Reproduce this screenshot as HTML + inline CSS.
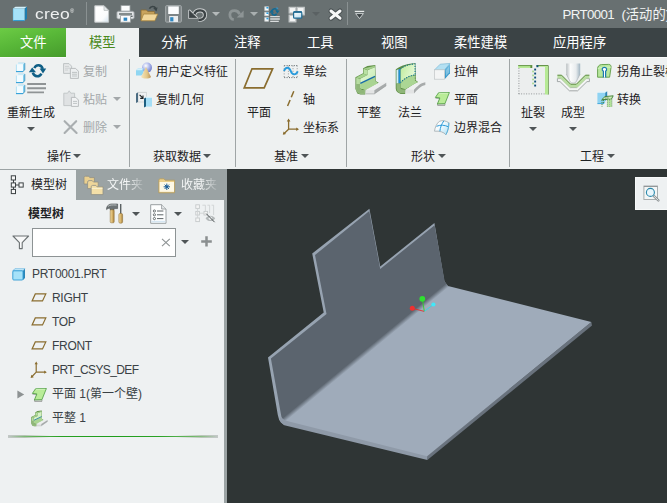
<!DOCTYPE html>
<html lang="zh-CN">
<head>
<meta charset="utf-8">
<title>PRT0001 - Creo</title>
<style>
html,body{margin:0;padding:0;}
body{width:667px;height:503px;overflow:hidden;position:relative;background:#2f3535;
 font-family:"Liberation Sans","Noto Sans CJK SC",sans-serif;font-size:12px;color:#1e2224;}
.abs{position:absolute;}
#title{left:0;top:0;width:667px;height:28px;background:#687071;}
#tabs{left:0;top:28px;width:667px;height:29px;background:#3b4345;}
#ribbon{left:0;top:57px;width:667px;height:112px;background:#eef1f1;box-shadow:inset 0 1px 0 #f9fafa;}
.tab{position:absolute;top:28px;height:29px;line-height:29.6px;font-size:13.3px;color:#fff;white-space:nowrap;}
.t{position:absolute;white-space:nowrap;line-height:16px;height:16px;}
.dis{color:#a3a8aa;}
.sep{position:absolute;top:59px;width:1px;height:108px;background:#9fa5a6;}
.arr{position:absolute;width:0;height:0;border-left:4px solid transparent;border-right:4px solid transparent;border-top:4.4px solid #4f5557;}
.arrl{border-top-color:#a3a8aa;}
svg{position:absolute;overflow:visible;}
#ptabs{left:0;top:169px;width:227px;height:31px;background:#9ba3a4;}
#pbody{left:0;top:199.6px;width:224px;height:304px;background:#eef1f2;}
#pdiv{left:224px;top:199.6px;width:3px;height:304px;background:#9ba3a4;}
.tree{font-size:12px;color:#3a4145;}
.lat{letter-spacing:-0.3px;}
</style>
</head>
<body>
<div id="title" class="abs"></div>
<div id="tabs" class="abs"></div>
<div id="ribbon" class="abs"></div>

<!-- title bar -->
<div class="t" style="left:34.5px;top:5px;font-size:15.5px;line-height:18px;color:#eef0f0;letter-spacing:0.2px;transform:scaleX(1.13);transform-origin:0 0;">creo<span style="font-size:5px;line-height:0;vertical-align:6px;letter-spacing:0;">®</span></div>
<div class="t" style="left:562.5px;top:6.8px;font-size:13.3px;color:#f2f4f4;"><span style="letter-spacing:-0.65px;">PRT0001</span><span style="margin-left:3.8px;"> (活动的)</span></div>


<!-- title bar icons -->
<svg style="left:12px;top:6px;" width="16" height="16" viewBox="0 0 16 16">
<polygon points="1,2.4 3.5,0.8 15,0.8 12.6,2.4" fill="#d4f1fc"/>
<polygon points="12.6,2.4 15,0.8 15,12.8 12.6,14.6" fill="#1d7db0"/>
<rect x="1" y="2.4" width="11.6" height="12.2" fill="#a6e2f9"/>
<path d="M1,14.6 H12.6" stroke="#2d9bd2" stroke-width="1"/>
<path d="M1.3,2.4 V14.6" stroke="#6cc4ea" stroke-width="0.6"/>
</svg>
<div class="abs" style="left:86px;top:2px;width:1px;height:23px;background:#8a9192;"></div>
<!-- new -->
<svg style="left:94px;top:5px;" width="16" height="18" viewBox="0 0 16 18">
<linearGradient id="newg" x1="0.2" y1="0.2" x2="1" y2="1"><stop offset="0" stop-color="#ffffff"/><stop offset="0.6" stop-color="#fbfcfd"/><stop offset="1" stop-color="#d3e3ef"/></linearGradient>
<path d="M0.8,0.8 H10 L14.6,5.4 V17.2 H0.8 Z" fill="url(#newg)" stroke="#c3c7c8" stroke-width="1"/>
<path d="M10,0.8 V5.4 H14.6 Z" fill="#e4e8ea" stroke="#b9bebf" stroke-width="0.8"/>
</svg>
<!-- print -->
<svg style="left:116px;top:5px;" width="19" height="18" viewBox="0 0 19 18">
<rect x="5" y="0.6" width="9" height="6" fill="#fbfcfd" stroke="#9aa0a2" stroke-width="0.8"/>
<rect x="0.8" y="6.2" width="17.4" height="7.8" rx="1.6" fill="#e4e7e9" stroke="#8d9496" stroke-width="0.9"/>
<rect x="3" y="8.2" width="13" height="1.6" fill="#6d7577"/>
<rect x="4.6" y="10.6" width="9.8" height="6.6" fill="#fbfcfd" stroke="#9aa0a2" stroke-width="0.8"/>
<rect x="7.6" y="12.6" width="3.6" height="3.2" fill="#2e86c0"/>
<rect x="15" y="10.6" width="1.6" height="1.4" fill="#5d6668"/>
</svg>
<!-- open -->
<svg style="left:140px;top:5px;" width="19" height="17" viewBox="0 0 19 17">
<path d="M1,5 H6.4 L7.8,6.6 H14.6 V15.6 H1 Z" fill="#c9a45e" stroke="#8c6d33" stroke-width="0.8"/>
<path d="M3.6,9 H17.8 L14.8,15.8 H1 Z" fill="#f1d79b" stroke="#a5843f" stroke-width="0.8"/>
<path d="M9.4,3.6 C11,0.8 14.6,0.8 15.6,3.4" fill="none" stroke="#3b4446" stroke-width="1.6"/>
<path d="M13.2,3 L17.6,2.4 L16.4,6.4 Z" fill="#3b4446"/>
</svg>
<!-- save -->
<svg style="left:165px;top:5px;" width="17" height="18" viewBox="0 0 17 18">
<rect x="0.7" y="0.7" width="15.6" height="16.4" rx="0.8" fill="#7d8486" stroke="#a8aeaf" stroke-width="1"/>
<rect x="3.2" y="1.4" width="10.6" height="7.6" fill="#fbfcfd"/>
<rect x="4.2" y="11" width="8.8" height="6" fill="#e9ecee"/>
<rect x="5.2" y="12.2" width="3.2" height="4.2" fill="#2e86c0"/>
</svg>
<!-- undo -->
<svg style="left:188px;top:7px;" width="19" height="15" viewBox="0 0 19 15">
<g stroke="#c9cdce" stroke-width="2.6" stroke-linejoin="round" fill="#c9cdce">
<path d="M6.4,7 C8.2,2.2 16.6,2 17,7.6 C17.2,11 14.4,13.2 10.4,12.9" fill="none" stroke-width="4.2"/>
<polygon points="1.4,3.8 1.4,10.8 8.6,10.8"/>
</g>
<path d="M6.4,7 C8.2,2.2 16.6,2 17,7.6 C17.2,11 14.4,13.2 10.4,12.9" fill="none" stroke="#3c4345" stroke-width="2.4"/>
<polygon points="1.4,3.8 1.4,10.8 8.6,10.8" fill="#3c4345" stroke="#3c4345" stroke-width="0.8" stroke-linejoin="round"/>
</svg>
<div class="arr" style="left:212px;top:12px;border-top-color:#b4b9ba;"></div>
<!-- redo -->
<svg style="left:227px;top:8px;" width="18" height="13" viewBox="0 0 18 13">
<path d="M12.6,6.2 C11,1.6 3.4,1.4 2.9,6.4 C2.7,9.4 4.6,11.4 6.8,11.4" fill="none" stroke="#8d9495" stroke-width="2.8"/>
<polygon points="16.6,2.6 16.6,9.6 9.6,9.6" fill="#8d9495"/>
</svg>
<div class="arr" style="left:250px;top:12px;border-top-color:#a9afb0;"></div>
<!-- regenerate small -->
<svg style="left:264px;top:5px;" width="17" height="18" viewBox="0 0 17 18">
<g fill="#fbfdfe" stroke="#c9cdce" stroke-width="0.8">
<rect x="0.8" y="1.8" width="3.6" height="3.6"/><rect x="0.8" y="7.2" width="3.6" height="3.6"/><rect x="0.8" y="12.6" width="3.6" height="3.6"/>
</g>
<g fill="#2d9fe0"><rect x="2.4" y="2" width="2" height="1.6"/><rect x="2.4" y="7.4" width="2" height="1.6"/><rect x="2.4" y="12.8" width="2" height="1.6"/></g>
<path d="M8.2,5.8 C8.8,3.4 12,2.8 13.2,5.6" fill="none" stroke="#126a94" stroke-width="1.7"/>
<polygon points="11.2,5.4 15.6,5.4 13.4,8.6" fill="#126a94"/>
<path d="M12.6,8.6 C11.6,10.6 8.6,10.6 7.8,8" fill="none" stroke="#126a94" stroke-width="1.7"/>
<polygon points="5.4,7.8 10,7.8 7.6,4.6" fill="#126a94"/>
<path d="M12.4,1.6 L14.6,3.6 L12.6,4.6" fill="#2d9fe0" opacity="0.7"/>
<path d="M6.2,11.6 H15.8 M6.2,14 H15.8 M6.2,16.4 H14.8" stroke="#d9dcdd" stroke-width="1.3"/>
</svg>
<!-- windows -->
<svg style="left:288px;top:6px;" width="18" height="17" viewBox="0 0 18 17">
<g fill="#f3f4f4" stroke="#c3c7c8" stroke-width="1.3">
<rect x="1.2" y="1.4" width="6.6" height="5.6"/>
<rect x="9.2" y="1.4" width="7" height="7.4"/>
<rect x="1.2" y="9.2" width="6.6" height="6.6"/>
</g>
<linearGradient id="wing" x1="0" y1="0" x2="0.6" y2="1"><stop offset="0" stop-color="#ffffff"/><stop offset="1" stop-color="#c4e2f2"/></linearGradient>
<rect x="5.6" y="5.8" width="8.2" height="6.4" rx="1" fill="url(#wing)" stroke="#1f6a92" stroke-width="1.2"/>
<path d="M5.6,6 H13.8" stroke="#1f6a92" stroke-width="1.6"/>
</svg>
<div class="arr" style="left:312px;top:12px;border-top-color:#5a6163;"></div>
<!-- close X -->
<svg style="left:328px;top:8px;" width="15" height="13" viewBox="0 0 15 13">
<path d="M3,3 L12,10.2 M12,3 L3,10.2" stroke="#4a5153" stroke-width="5" stroke-linecap="round"/>
<path d="M3,3 L12,10.2 M12,3 L3,10.2" stroke="#f6f7f7" stroke-width="3" stroke-linecap="round"/>
</svg>
<div class="abs" style="left:347px;top:2px;width:1px;height:23px;background:#8a9192;"></div>
<svg style="left:354px;top:10px;" width="11" height="10" viewBox="0 0 11 10">
<path d="M0.8,1.4 H10.2" stroke="#e6e9e9" stroke-width="1.2"/>
<path d="M1.6,3.6 H9.4 L5.5,8.6 Z" fill="#3c4345" stroke="#d5d9da" stroke-width="0.9"/>
</svg>

<!-- tabs -->
<div class="abs" style="left:0;top:28px;width:66px;height:29px;background:linear-gradient(165deg,#6ccb45 0%,#58b738 45%,#469b2c 100%);"></div>
<div class="abs" style="left:66px;top:28px;width:73px;height:30px;background:#eef1f1;"></div>
<div class="tab" style="left:20px;">文件</div>
<div class="tab" style="left:89px;color:#4b8a1e;">模型</div>
<div class="tab" style="left:161px;">分析</div>
<div class="tab" style="left:234px;">注释</div>
<div class="tab" style="left:307px;">工具</div>
<div class="tab" style="left:381px;">视图</div>
<div class="tab" style="left:454px;">柔性建模</div>
<div class="tab" style="left:553px;">应用程序</div>

<!-- ribbon separators -->
<div class="sep" style="left:129px;"></div>
<div class="sep" style="left:235px;"></div>
<div class="sep" style="left:346px;"></div>
<div class="sep" style="left:509px;"></div>


<!-- ribbon icons group 1 -->
<svg style="left:15px;top:62px;" width="32" height="33" viewBox="0 0 32 33">
<g transform="translate(1,0.8)"><polygon points="0.4,1.7 2.2,0.2 8.8,0.2 7,1.7" fill="#e4f6fd"/><polygon points="7,1.7 8.8,0.2 8.8,7 7,8.7" fill="#86d0ef"/><rect x="0.4" y="1.7" width="6.6" height="7" fill="#f2fbff"/><path d="M0.4,1.7 V8.7" stroke="#9ad8f2" stroke-width="0.7"/><path d="M0,8.8 H7" stroke="#2f9fd8" stroke-width="1.1"/><path d="M8.8,0.2 V7 L7,8.7" fill="none" stroke="#2a86b6" stroke-width="0.7"/><path d="M2.2,0.2 H8.8" stroke="#7ecbee" stroke-width="0.5"/></g><g transform="translate(1,11.8)"><polygon points="0.4,1.7 2.2,0.2 8.8,0.2 7,1.7" fill="#e4f6fd"/><polygon points="7,1.7 8.8,0.2 8.8,7 7,8.7" fill="#86d0ef"/><rect x="0.4" y="1.7" width="6.6" height="7" fill="#f2fbff"/><path d="M0.4,1.7 V8.7" stroke="#9ad8f2" stroke-width="0.7"/><path d="M0,8.8 H7" stroke="#2f9fd8" stroke-width="1.1"/><path d="M8.8,0.2 V7 L7,8.7" fill="none" stroke="#2a86b6" stroke-width="0.7"/><path d="M2.2,0.2 H8.8" stroke="#7ecbee" stroke-width="0.5"/></g><g transform="translate(1,22.8)"><polygon points="0.4,1.7 2.2,0.2 8.8,0.2 7,1.7" fill="#e4f6fd"/><polygon points="7,1.7 8.8,0.2 8.8,7 7,8.7" fill="#86d0ef"/><rect x="0.4" y="1.7" width="6.6" height="7" fill="#f2fbff"/><path d="M0.4,1.7 V8.7" stroke="#9ad8f2" stroke-width="0.7"/><path d="M0,8.8 H7" stroke="#2f9fd8" stroke-width="1.1"/><path d="M8.8,0.2 V7 L7,8.7" fill="none" stroke="#2a86b6" stroke-width="0.7"/><path d="M2.2,0.2 H8.8" stroke="#7ecbee" stroke-width="0.5"/></g>
<path d="M19.4,6.2 C20.6,2.6 26,1.6 27.8,6.8" fill="none" stroke="#0f5f86" stroke-width="2.5"/>
<polygon points="24.6,6.6 31.2,6.6 28,11.4" fill="#0f5f86"/>
<path d="M26.4,11.6 C24.6,15.2 19.4,15.4 17.8,10.6" fill="none" stroke="#0f5f86" stroke-width="2.5"/>
<polygon points="13.8,10.2 21,10.2 17.2,5.6" fill="#0f5f86"/>
<path d="M12.2,22 H31 M12.2,26.2 H31 M12.2,30.4 H29" stroke="#8f9495" stroke-width="1.9"/>
</svg>
<!-- copy (disabled) -->
<svg style="left:63px;top:63px;" width="16" height="16" viewBox="0 0 16 16">
<path d="M0.6,0.6 H6 L8.6,3.2 V10.4 H0.6 Z" fill="#e6e9ea" stroke="#b9bebf" stroke-width="0.9"/>
<path d="M2,3.4 H6 M2,5.2 H7 M2,7 H5" stroke="#c6cacb" stroke-width="0.8"/>
<path d="M7.4,5.4 H12.6 L15.4,8.2 V15.4 H7.4 Z" fill="#eceff0" stroke="#b3b8b9" stroke-width="0.9"/>
<path d="M9,9.4 H14 M9,11.2 H14 M9,13 H14" stroke="#b9bebf" stroke-width="0.9"/>
</svg>
<!-- paste (disabled) -->
<svg style="left:63px;top:90px;" width="16" height="17" viewBox="0 0 16 17">
<path d="M0.8,3.2 H4.6 L6.2,0.8 L7.8,3.2 H11.6 V15.6 H0.8 Z" fill="#dfe2e3" stroke="#bfc4c5" stroke-width="0.9"/>
<path d="M8.4,7.4 H12.8 L15.4,10 V16.4 H8.4 Z" fill="#f1f3f4" stroke="#b3b8b9" stroke-width="0.9"/>
<path d="M10,11.4 H14 M10,13.4 H14" stroke="#b9bebf" stroke-width="0.9"/>
</svg>
<!-- delete (disabled) -->
<svg style="left:63px;top:120px;" width="15" height="14" viewBox="0 0 15 14">
<path d="M1.6,1.2 L13.6,13 M13.2,1.2 L1.6,13" stroke="#a9aeb0" stroke-width="2.1" stroke-linecap="round"/>
</svg>
<!-- UDF -->
<svg style="left:135px;top:62px;" width="18" height="18" viewBox="0 0 18 18">
<defs><radialGradient id="sph" cx="0.38" cy="0.32" r="0.7"><stop offset="0" stop-color="#ffffff"/><stop offset="0.55" stop-color="#a9b4ea"/><stop offset="1" stop-color="#6f7cc8"/></radialGradient>
<linearGradient id="cone" x1="0" x2="1"><stop offset="0" stop-color="#f6e6bd"/><stop offset="0.6" stop-color="#e3c788"/><stop offset="1" stop-color="#b8925a"/></linearGradient></defs>
<circle cx="12" cy="5.6" r="5" fill="url(#sph)"/>
<polygon points="1,8.2 3,6.4 8.4,6.4 8.4,11.6 6.6,13.4 1,13.4" fill="#8fd6f2"/>
<polygon points="1,8.2 3,6.4 8.4,6.4 6.6,8.2" fill="#d5f0fb"/>
<path d="M11,5 L16,15 C14.4,17 8,17 6,15 Z" fill="url(#cone)"/>
</svg>
<!-- copy geometry -->
<svg style="left:135px;top:91px;" width="18" height="17" viewBox="0 0 18 17">
<polygon points="1,2.6 3.2,0.8 11.6,0.8 9.4,2.6" fill="#dfe3e4"/>
<rect x="3" y="1.6" width="8.6" height="9.4" fill="#eef0f1" stroke="#c3c8c9" stroke-width="0.6"/>
<polygon points="1,2.6 3,1.6 3,11 1,12" fill="#4b6c82"/>
<path d="M4.6,3.8 L8,7.2 M8,4.6 V7.4 H5.2" stroke="#1e2224" stroke-width="1.1" fill="none"/>
<polygon points="9,7.4 11,5.8 17,5.8 17,7.4" fill="#e2f5fd"/>
<rect x="11" y="6.8" width="6" height="8.8" fill="#a5def6"/>
<polygon points="9,7.4 11,6.6 11,15.6 9,16.4" fill="#1d5e80"/>
</svg>

<!-- group 1 -->
<div class="t" style="left:7px;top:105px;">重新生成</div>
<div class="arr" style="left:27px;top:127.2px;"></div>
<div class="t dis" style="left:83px;top:64px;">复制</div>
<div class="t dis" style="left:83px;top:92px;">粘贴</div>
<div class="arr arrl" style="left:113px;top:97px;"></div>
<div class="t dis" style="left:83px;top:120px;">删除</div>
<div class="arr arrl" style="left:113px;top:125px;"></div>
<div class="t" style="left:47px;top:149px;">操作</div>
<div class="arr" style="left:73px;top:154px;"></div>

<!-- group 2 -->
<div class="t" style="left:156px;top:64px;">用户定义特征</div>
<div class="t" style="left:156px;top:92px;">复制几何</div>
<div class="t" style="left:153px;top:149px;">获取数据</div>
<div class="arr" style="left:203px;top:154px;"></div>


<!-- ribbon icons group 3 -->
<svg style="left:243px;top:66px;" width="31" height="24" viewBox="0 0 31 24">
<polygon points="9,2.8 29.6,2.8 21.2,21.9 1.2,21.9" fill="none" stroke="#8a6d2f" stroke-width="1.7" stroke-linejoin="miter"/>
</svg>
<svg style="left:283px;top:64px;" width="16" height="15" viewBox="0 0 16 15">
<path d="M1.2,1.6 H14.2 M1.2,13.6 H14.2" stroke="#5d6668" stroke-width="1" stroke-dasharray="1 1.4"/>
<path d="M1.2,1.6 V13.6 M14.2,1.6 V13.6 M5.4,1.6 V13.6 M10,1.6 V13.6" stroke="#8a9092" stroke-width="0.9" stroke-dasharray="1 1.6"/>
<path d="M1,7 C2.6,2.6 6,2.6 7.8,7.2 C9.4,11.4 12.8,11.4 14.8,7.4" fill="none" stroke="#2a9bdc" stroke-width="1.9"/>
</svg>
<svg style="left:286px;top:90px;" width="10" height="18" viewBox="0 0 10 18">
<path d="M7.8,1.2 L1.2,16.8" stroke="#8a6d2f" stroke-width="1.5" stroke-dasharray="6.5 3"/>
</svg>
<svg style="left:282px;top:118px;" width="18" height="18" viewBox="0 0 18 18">
<path d="M6.6,2 V11.2 H15.6 M6.6,11.2 L1.6,16" fill="none" stroke="#8a6d2f" stroke-width="1.3"/>
<path d="M6.6,0.6 L4.8,3.4 H8.4 Z M17,11.2 L14.2,9.4 V13 Z M0.8,16.8 L1.6,13.6 L4,16 Z" fill="#8a6d2f"/>
</svg>
<!-- ribbon icons group 4 -->
<svg style="left:354.5px;top:64.5px;" width="32" height="30" viewBox="0 0 32 30">
<g id="flatico">
<linearGradient id="fg1" x1="0" y1="0" x2="1" y2="1"><stop offset="0" stop-color="#e6f9db"/><stop offset="1" stop-color="#bfe8a8"/></linearGradient>
<polygon points="0.43,12.14 8.11,8.36 8.11,3.20 12.39,1.06 20.33,0.05 20.70,15.92 23.73,17.81 10.50,25.24 10.25,29.39 5.46,29.39 2.32,28.39 0.43,24.10" fill="#5d8d44"/>
<polygon points="1.06,12.52 8.36,8.87 12.39,10.00 5.09,13.53" fill="#a6d38e"/>
<polygon points="8.61,8.74 8.61,3.70 12.39,5.21 12.39,10.00" fill="#b9e1a3"/>
<polygon points="8.61,3.58 19.82,0.68 19.95,2.19 12.39,5.09" fill="#a3cf8b"/>
<polygon points="5.21,13.65 12.52,10.12 12.52,5.34 19.95,2.32 20.07,16.30 22.85,18.31 10.50,24.86 5.21,23.22" fill="url(#fg1)"/>
<polygon points="5.21,18.81 20.07,11.89 20.07,16.30 22.85,18.31 10.50,24.86 5.21,23.22" fill="#a9d492"/>
<path d="M5.34,18.44 L20.07,11.38" stroke="#176ca6" stroke-width="1.4"/>
<path d="M1.18,12.77 L4.96,13.65 L4.96,23.22 C5.21,24.73 6.72,25.11 9.75,25.11 L9.75,28.76 L5.72,28.76 C2.95,28.51 1.31,26.50 1.18,23.73 Z" fill="#b7dca2"/>
<path d="M1.18,19.07 L4.96,19.07 L4.96,23.22 C5.21,24.73 6.72,25.11 9.75,25.11 L9.75,28.76 L5.72,28.76 C2.95,28.51 1.31,26.50 1.18,23.73 Z" fill="#8fb679"/>
<polygon points="10.63,24.99 23.22,18.31 31.28,16.93 31.28,17.81 19.32,25.24" fill="#eceeee"/>
<polygon points="10.63,25.11 19.32,25.36 19.32,28.89 10.63,28.89" fill="#e2e4e4"/>
<polygon points="19.32,25.36 31.28,17.81 31.28,20.70 19.32,28.89" fill="#a7abab"/>
<path d="M10.63,28.89 L19.32,28.89 L31.28,20.70" fill="none" stroke="#8d9191" stroke-width="0.5"/>
</g>
</svg>
<svg style="left:394.5px;top:63px;" width="31" height="31" viewBox="0 0 31 31">
<linearGradient id="fg2" x1="0" y1="0" x2="1" y2="0.5"><stop offset="0" stop-color="#bfeb9b"/><stop offset="1" stop-color="#e6f9d8"/></linearGradient>
<path d="M0.73,6.59 C3.88,3.82 10.18,0.67 20.38,0.29 L20.75,17.17 L23.02,18.93 L10.43,26.74 L10.18,30.89 L5.77,30.89 C2.87,30.26 0.86,28.38 0.73,25.60 Z" fill="#5d8d44"/>
<path d="M5.52,6.08 C8.92,2.81 13.95,1.30 20.00,0.92 L20.12,12.00 C13.95,12.63 8.92,15.78 5.52,19.69 Z" fill="url(#fg2)"/>
<path d="M5.52,19.69 C8.92,15.78 13.95,12.63 20.12,12.00 L20.25,17.29 L22.39,19.18 L10.43,26.36 L5.52,24.72 Z" fill="#abd694"/>
<path d="M5.52,6.08 C8.92,2.81 13.95,1.30 20.00,0.92 L20.12,12.00 C13.95,12.63 8.92,15.78 5.52,19.69" fill="none" stroke="#0e6f8e" stroke-width="1.1" stroke-dasharray="1.2 1.3"/>
<path d="M20.12,12.00 L20.25,17.29 L22.39,19.18" fill="none" stroke="#5d8d44" stroke-width="0.9" stroke-dasharray="1.2 1.3"/>
<polygon points="1.48,7.09 3.63,6.34 3.63,20.57 1.48,20.57" fill="#d3eefa"/>
<polygon points="3.50,6.46 5.39,5.83 5.39,20.57 3.50,20.57" fill="#1f8fd6"/>
<path d="M1.48,20.57 L5.39,20.57 L5.39,24.72 C5.64,26.23 7.03,26.61 9.92,26.61 L9.92,30.26 L6.02,30.26 C3.25,30.01 1.61,28.00 1.48,25.23 Z" fill="#8fb679"/>
<path d="M10.68,26.49 C14.58,24.60 18.36,20.82 22.77,19.43 L30.33,18.17 L30.33,19.18 C25.29,19.94 22.14,23.34 18.99,26.74 Z" fill="#eef0f0"/>
<polygon points="10.68,26.61 18.99,26.86 18.99,30.39 10.68,30.39" fill="#e2e4e4"/>
<path d="M18.99,26.86 C22.14,23.34 25.29,19.94 30.33,19.18 L30.33,21.95 C25.92,22.71 22.77,26.49 18.99,30.39 Z" fill="#a7abab"/>
</svg>
<!-- extrude -->
<svg style="left:434px;top:62.5px;" width="17" height="17" viewBox="0 0 17 17">
<linearGradient id="exr" x1="0" y1="0" x2="0" y2="1"><stop offset="0" stop-color="#7cc3e4"/><stop offset="1" stop-color="#2c8fc4"/></linearGradient>
<polygon points="0.6,6.8 6.2,1.2 16,0.4 10.6,6.8" fill="#b4e0f2" stroke="#6fb4d4" stroke-width="0.6"/>
<polygon points="10.6,6.8 16,0.4 16,10.2 10.6,16.2" fill="url(#exr)"/>
<polygon points="12,7.2 15,3.6 15,9.6 12,13" fill="#a9d8ee" opacity="0.55"/>
<rect x="0.6" y="6.8" width="10" height="9.4" fill="#f3f4f4" stroke="#c0c5c6" stroke-width="0.7"/>
</svg>
<!-- planar -->
<svg id="planarico" style="left:434px;top:92px;" width="16" height="14" viewBox="0 0 16 14">
<polygon points="1.4,5.6 5.9,6.1 3.4,12 3.7,13.6 11,13.4 11.2,11.6 10.9,11.8 5.9,6.8 1.5,6.6" fill="#8d918d"/>
<polygon points="3.4,12 10.9,11.8 11,13.3 3.7,13.5" fill="#e6e8e6" stroke="#7d817d" stroke-width="0.5"/>
<polygon points="4.5,0.8 15.4,0.5 10.9,11.7 3.4,11.9 5.9,5.9 1.4,5.4" fill="#b9ec98" stroke="#4b9a40" stroke-width="0.8" stroke-linejoin="round"/>
<path d="M5,1.6 L14.2,1.3" stroke="#d6f6c2" stroke-width="0.8"/>
</svg>
<!-- boundary blend -->
<svg style="left:434px;top:119.5px;" width="17" height="16" viewBox="0 0 17 16">
<linearGradient id="bbg" x1="0" y1="0" x2="1" y2="0.8"><stop offset="0" stop-color="#ffffff"/><stop offset="0.45" stop-color="#f4fbfe"/><stop offset="1" stop-color="#b5e4f7"/></linearGradient>
<path d="M5.4,1.3 C8,0.2 12,0.6 14.9,2.8 C14.9,7 13.8,11.4 11.9,14.7 C10,12.2 5.4,10.6 0.5,11.2 C1,7.4 2.6,3.6 5.4,1.3 Z" fill="url(#bbg)" stroke="#9fa9ad" stroke-width="0.8"/>
<path d="M9.9,0.8 C7.6,4 6.2,7.6 5.9,11.2 M2.5,6.3 C6.4,4.6 10.8,5 14.4,6.8" fill="none" stroke="#2a9ad8" stroke-width="1"/>
<path d="M14.9,2.8 C14.9,7 13.8,11.4 11.9,14.7" fill="none" stroke="#4fb2e2" stroke-width="0.9"/>
</svg>

<!-- group 3 -->
<div class="t" style="left:247px;top:105px;">平面</div>
<div class="t" style="left:303px;top:64px;">草绘</div>
<div class="t" style="left:303px;top:92px;">轴</div>
<div class="t" style="left:303px;top:120px;">坐标系</div>
<div class="t" style="left:274px;top:149px;">基准</div>
<div class="arr" style="left:301px;top:154px;"></div>

<!-- group 4 -->
<div class="t" style="left:357px;top:105px;">平整</div>
<div class="t" style="left:398px;top:105px;">法兰</div>
<div class="t" style="left:454px;top:64px;">拉伸</div>
<div class="t" style="left:454px;top:92px;">平面</div>
<div class="t" style="left:454px;top:120px;">边界混合</div>
<div class="t" style="left:411px;top:149px;">形状</div>
<div class="arr" style="left:438px;top:154px;"></div>


<!-- ribbon icons group 5 -->
<svg style="left:518px;top:64.5px;" width="31" height="30" viewBox="0 0 31 30">
<rect x="0.6" y="2.6" width="27" height="26.6" fill="#eceeee"/>
<path d="M0.9,3 V29 M0.6,28.9 H27" stroke="#8a9092" stroke-width="0.9" stroke-dasharray="1 1.5" fill="none"/>
<rect x="0.2" y="0.4" width="14" height="2.6" fill="#b6ea94"/>
<path d="M0.2,0.6 H14.2" stroke="#5a8a3c" stroke-width="0.9"/>
<rect x="12.4" y="0.4" width="1.8" height="2.6" fill="#5a8a3c"/>
<path d="M18.6,0.6 H30.2 V29.6" fill="none" stroke="#5a8a3c" stroke-width="1"/>
<path d="M19,2 H27.6 V29.2 H29.6 V1.2 H19 Z" fill="#b6ea94"/>
<rect x="27" y="1.2" width="2.8" height="28.2" fill="#b6ea94"/>
<rect x="18.4" y="0.2" width="2" height="2" fill="#0f4f78"/>
<g fill="#0f4f78"><rect x="16.2" y="3.6" width="1.9" height="1.9"/><rect x="16.2" y="7.6" width="1.9" height="1.9"/><rect x="16.2" y="11.6" width="1.9" height="1.9"/><rect x="16.2" y="15.6" width="1.9" height="1.9"/><rect x="16.2" y="19.6" width="1.9" height="1.9"/></g>
<g fill="#a5d68a"><rect x="14.2" y="5.6" width="1.7" height="1.7"/><rect x="14.2" y="9.6" width="1.7" height="1.7"/><rect x="14.2" y="13.6" width="1.7" height="1.7"/><rect x="14.2" y="17.6" width="1.7" height="1.7"/></g>
</svg>
<svg style="left:557px;top:62.5px;" width="33" height="32" viewBox="0 0 33 32">
<linearGradient id="pun" x1="0" x2="1"><stop offset="0" stop-color="#b9bfc1"/><stop offset="0.3" stop-color="#fbfcfc"/><stop offset="0.7" stop-color="#e8ecee"/><stop offset="1" stop-color="#9fb3c0"/></linearGradient>
<path d="M0.4,15.6 H4.2 L13.4,24.6 H19.6 L28.8,15.6 H32.4 V18.6 H30 L20.6,27.8 H12.4 L3,18.6 H0.4 Z" fill="#f4f5f5" stroke="#8f9596" stroke-width="0.8"/>
<path d="M0.4,12.2 H4.6 L13.6,21.2 H19.4 L28.4,12.2 H32.4 V15.4 H29.6 L20.4,24.4 H12.6 L3.4,15.4 H0.4 Z" fill="#b9dda2"/>
<path d="M0.4,12.2 H4.6 L13.6,21.2 H19.4 L28.4,12.2 H32.4" fill="none" stroke="#5a8a3c" stroke-width="1"/>
<path d="M9.2,0.4 H23.2 V11 L19,19 C18,20.4 14.4,20.4 13.4,19 L9.2,11 Z" fill="url(#pun)"/>
<path d="M9.2,11 L13.4,19 C14.4,20.4 18,20.4 19,19 L23.2,11" fill="none" stroke="#a9afb1" stroke-width="0.6"/>
</svg>
<!-- corner relief -->
<svg style="left:597px;top:64px;" width="15" height="14" viewBox="0 0 15 14">
<path d="M0.6,4.6 C0.6,2.6 2,0.8 4.4,0.6 L11.6,0.4 C13.6,0.4 14.4,1.8 14,3.6 L12.6,13.2 H0.6 Z" fill="#b7e79d" stroke="#5d9a45" stroke-width="0.9"/>
<path d="M0.8,4.8 C3,3.2 9,3 13.8,3.2" fill="none" stroke="#d8f4c8" stroke-width="0.9"/>
<path d="M6.4,13.4 V7.2 C4.6,6.2 4.8,3.4 7.4,3.4 C10,3.4 10.2,6.2 8.6,7.2 V13.4" fill="#ffffff" stroke="#1a7ab0" stroke-width="1.2"/>
</svg>
<!-- convert -->
<svg style="left:597px;top:91px;" width="17" height="17" viewBox="0 0 17 17">
<polygon points="0.4,1.8 2.4,0.2 10.2,0.2 8.2,1.8" fill="#dff4fc"/>
<rect x="0.4" y="1.8" width="7.8" height="10.6" fill="#8fd3f2"/>
<polygon points="8.2,1.8 10.2,0.2 10.2,8 8.2,10" fill="#2b86b8"/>
<path d="M0.4,12.6 H7" stroke="#2f9fd8" stroke-width="0.9"/>
<polygon points="4.8,8.6 8,5.6 16.2,4.8 14.4,8.2" fill="#cdeeb8" stroke="#3d7a32" stroke-width="0.9" stroke-linejoin="round"/>
<path d="M8.4,7 H11.6" stroke="#3d3d3d" stroke-width="0.9" stroke-dasharray="1 1"/>
<path d="M5,9 V15.6 M6.6,9 V13" stroke="#3d7a32" stroke-width="0.9" stroke-dasharray="1.1 0.9"/>
<rect x="10.6" y="8.4" width="1.6" height="7.6" fill="#b7e79d"/><rect x="13" y="8.4" width="1.6" height="7.6" fill="#b7e79d"/>
<path d="M10.4,8.6 V16 M12.6,8.6 V16 M14.8,8.4 V16" stroke="#3d7a32" stroke-width="0.7" stroke-dasharray="1.1 0.9"/>
</svg>

<!-- group 5 -->
<div class="t" style="left:521px;top:105px;">扯裂</div>
<div class="arr" style="left:529px;top:127.2px;"></div>
<div class="t" style="left:561px;top:105px;">成型</div>
<div class="arr" style="left:569px;top:127.2px;"></div>
<div class="t" style="left:617px;top:64px;">拐角止裂槽</div>
<div class="t" style="left:617px;top:92px;">转换</div>
<div class="t" style="left:580px;top:149px;">工程</div>
<div class="arr" style="left:607px;top:154px;"></div>

<!-- left panel -->
<div id="ptabs" class="abs"></div>
<div id="pbody" class="abs"></div>
<div id="pdiv" class="abs"></div>
<div class="abs" style="left:0;top:170px;width:76px;height:30px;background:#eef1f2;"></div>
<div class="t" style="left:31px;top:177px;">模型树</div>
<div class="t" style="left:107px;top:177px;color:#f4f6f6;width:36px;overflow:hidden;-webkit-mask-image:linear-gradient(90deg,#000 55%,rgba(0,0,0,0.15) 100%);mask-image:linear-gradient(90deg,#000 55%,rgba(0,0,0,0.15) 100%);">文件夹</div>
<div class="t" style="left:181px;top:177px;color:#f4f6f6;width:36px;overflow:hidden;-webkit-mask-image:linear-gradient(90deg,#000 55%,rgba(0,0,0,0.15) 100%);mask-image:linear-gradient(90deg,#000 55%,rgba(0,0,0,0.15) 100%);">收藏夹</div>

<div class="t" style="left:28px;top:206px;font-weight:bold;">模型树</div>
<div class="arr" style="left:132px;top:212px;"></div>
<div class="arr" style="left:174px;top:212px;"></div>

<div class="abs" style="left:32px;top:227.7px;width:142px;height:27px;background:#fff;border:1px solid #8d9394;box-sizing:content-box;"></div>
<div class="arr" style="left:181px;top:240px;"></div>

<div class="t tree lat" style="left:32px;top:266px;">PRT0001.PRT</div>
<div class="t tree lat" style="left:52px;top:290px;">RIGHT</div>
<div class="t tree lat" style="left:52px;top:314px;">TOP</div>
<div class="t tree lat" style="left:52px;top:338px;">FRONT</div>
<div class="t tree" style="left:52px;top:362px;letter-spacing:-0.62px;">PRT_CSYS_DEF</div>
<div class="t tree" style="left:52px;top:386px;">平面 1(第一个壁)</div>
<div class="t tree" style="left:52px;top:410px;">平整 1</div>
<div class="abs" style="left:8px;top:435px;width:210px;height:3px;background:linear-gradient(90deg,#c3c8c8 0%,#b4c4b2 8%,rgba(195,200,200,0) 20%,rgba(195,200,200,0) 80%,#b9c6b8 92%,#c3c8c8 100%);"></div>
<div class="abs" style="left:8px;top:435.5px;width:210px;height:1.6px;background:linear-gradient(90deg,rgba(40,160,30,0) 0%,#5fb356 12%,#27a022 25%,#1f9d1c 50%,#2aa226 72%,#6db866 88%,rgba(40,160,30,0) 100%);"></div>


<div class="abs" style="left:635px;top:177px;width:32px;height:33px;background:#eef1f2;border:1px solid #f7f9f9;border-right:0;box-sizing:border-box;"></div>
<!-- panel icons -->
<svg style="left:10px;top:175px;" width="15" height="19" viewBox="0 0 15 19">
<path d="M3.5,5 V14 M6,10 H9" stroke="#3c4244" stroke-width="1"/>
<rect x="1.3" y="0.8" width="4.2" height="4.2" fill="#f6f7f7" stroke="#3c4244" stroke-width="1"/>
<rect x="1.3" y="7.9" width="4.2" height="4.2" fill="#f6f7f7" stroke="#3c4244" stroke-width="1"/>
<rect x="1.3" y="14.4" width="4.2" height="4.2" fill="#f6f7f7" stroke="#3c4244" stroke-width="1"/>
<rect x="9" y="7.9" width="4.2" height="4.2" fill="#f6f7f7" stroke="#3c4244" stroke-width="1"/>
</svg>
<svg style="left:83px;top:175px;" width="21" height="21" viewBox="0 0 21 21">
<g stroke="#8f8f86" stroke-width="0.8">
<path d="M1,2.6 C1,1.8 1.6,1.2 2.4,1.2 H5.6 L6.8,2.6 H11.4 V9 H1 Z" fill="#e9cf8f"/>
<path d="M4.6,7 C4.6,6.2 5.2,5.6 6,5.6 H9.2 L10.4,7 H15.2 V13.6 H4.6 Z" fill="#edd59a"/>
<path d="M8.2,11.8 C8.2,11 8.8,10.4 9.6,10.4 H12.8 L14,11.8 H20 V19.6 H8.2 Z" fill="#f3dfa8"/>
</g>
<path d="M8.8,13.4 H19.4" stroke="#fbf1cf" stroke-width="1"/>
</svg>
<svg style="left:158px;top:178px;" width="18" height="16" viewBox="0 0 18 16">
<path d="M0.8,2.2 C0.8,1.4 1.4,0.8 2.2,0.8 H6 L7.2,2.2 H16.6 V14.8 H0.8 Z" fill="#edd08a" stroke="#b39a5e" stroke-width="0.8"/>
<rect x="1.6" y="4" width="14.4" height="9.8" fill="#fdf8e6"/>
<path d="M8.8,5.6 V12 M5.6,8.8 H12 M6.6,6.6 L11,11 M11,6.6 L6.6,11" stroke="#1d5f9a" stroke-width="1"/>
<circle cx="8.8" cy="8.8" r="1.3" fill="#1d5f9a"/>
</svg>
<!-- hammer & screwdriver -->
<svg style="left:106px;top:203px;" width="19" height="21" viewBox="0 0 19 21">
<linearGradient id="wood" x1="0" x2="1"><stop offset="0" stop-color="#f0d9a0"/><stop offset="0.5" stop-color="#d9b66c"/><stop offset="1" stop-color="#a57f3c"/></linearGradient>
<path d="M0.6,5 C1.6,1.6 4,0.8 7,1 H11.6 V5.6 H8 V7 H4.2 V5.4 C3,5 1.8,5.4 0.6,6.6 Z" fill="#6c7375" stroke="#454b4d" stroke-width="0.6"/>
<path d="M2,3.4 C3.6,1.8 6,1.8 10.6,2" stroke="#c4c9ca" stroke-width="0.9" fill="none"/>
<rect x="4.2" y="6.8" width="4" height="13" rx="1" fill="url(#wood)" stroke="#8a6a30" stroke-width="0.5"/>
<rect x="14" y="1" width="1.4" height="10" fill="#5a6163"/>
<rect x="12.8" y="10.4" width="3.8" height="9.8" rx="1.4" fill="url(#wood)" stroke="#8a6a30" stroke-width="0.5"/>
</svg>
<!-- list doc -->
<svg style="left:150px;top:204px;" width="17" height="20" viewBox="0 0 17 20">
<path d="M0.7,0.7 H11.6 L16,5 V19.3 H0.7 Z" fill="#fdfefe" stroke="#8f9698" stroke-width="0.9"/>
<path d="M11.6,0.7 V5 H16" fill="#e4e8ea" stroke="#8f9698" stroke-width="0.8"/>
<path d="M1.4,17.6 H15.4" stroke="#d5e6f2" stroke-width="1.6"/>
<g fill="#fff" stroke="#4c5456" stroke-width="0.8"><circle cx="4.4" cy="7" r="1.1"/><circle cx="4.4" cy="10.8" r="1.1"/><circle cx="4.4" cy="14.6" r="1.1"/></g>
<path d="M7,7 H13.4 M7,10.8 H13.4 M7,14.6 H13.4" stroke="#4c5456" stroke-width="0.9"/>
</svg>
<!-- tree w/ eye (disabled) -->
<svg style="left:195px;top:204px;" width="21" height="21" viewBox="0 0 21 21">
<g fill="#f4f5f5" stroke="#c6cacb" stroke-width="0.9">
<rect x="0.8" y="0.8" width="3.6" height="3.6"/><rect x="0.8" y="7.4" width="3.6" height="3.6"/><rect x="0.8" y="14" width="3.6" height="3.6"/><rect x="9" y="7.4" width="3.6" height="3.6"/>
</g>
<path d="M2.6,4.4 V14 M4.4,9.2 H9 M7.4,1.2 H10.4 V7.4 M12.4,1.2 H14.6 V9 M16.6,1.2 H18.6 V11" fill="none" stroke="#cfd3d4" stroke-width="0.9"/>
<path d="M10.6,14.4 C12.6,10.8 18,10.8 20.2,14.4 C18,17.8 12.6,17.8 10.6,14.4 Z" fill="#b4b9ba"/>
<circle cx="15.4" cy="14.2" r="1.7" fill="#eef1f2"/>
<path d="M11.2,9.6 L19.6,18.2" stroke="#3c4244" stroke-width="0.9"/>
</svg>
<!-- filter funnel -->
<svg style="left:11.5px;top:235px;" width="18" height="15" viewBox="0 0 18 15">
<path d="M1,1 H16.6 L10.2,7.6 V13.6 H7.4 V7.6 Z" fill="#f8f9f9" stroke="#6a7072" stroke-width="1.1" stroke-linejoin="round"/>
</svg>
<!-- clear x and plus -->
<svg style="left:161px;top:238px;" width="10" height="9" viewBox="0 0 10 9"><path d="M1,0.8 L8.8,8.2 M8.8,0.8 L1,8.2" stroke="#8d9293" stroke-width="1.1"/></svg>
<svg style="left:201px;top:236px;" width="11" height="11" viewBox="0 0 11 11"><path d="M5.5,0.2 V10.6 M0.2,5.4 H10.8" stroke="#8a8f90" stroke-width="2.5"/></svg>
<!-- tree icons -->
<svg style="left:12px;top:267.5px;" width="14" height="13" viewBox="0 0 14 13">
<polygon points="0.8,2.8 2.8,0.8 13,0.8 11,2.8" fill="#d9f3fd" stroke="#3aa0d8" stroke-width="0.6"/>
<polygon points="11,2.8 13,0.8 13,10 11,12" fill="#2b86b8"/>
<rect x="0.8" y="2.8" width="10.2" height="9.2" rx="1" fill="#a6e2f9" stroke="#2f9bd4" stroke-width="0.9"/>
</svg>
<svg style="left:30.5px;top:293px;" width="16" height="10" viewBox="0 0 16 10"><polygon points="4.3,0.9 14.8,0.9 11.5,7.9 1.1,7.9" fill="none" stroke="#8a6d2f" stroke-width="1.2"/></svg><svg style="left:30.5px;top:317px;" width="16" height="10" viewBox="0 0 16 10"><polygon points="4.3,0.9 14.8,0.9 11.5,7.9 1.1,7.9" fill="none" stroke="#8a6d2f" stroke-width="1.2"/></svg><svg style="left:30.5px;top:341px;" width="16" height="10" viewBox="0 0 16 10"><polygon points="4.3,0.9 14.8,0.9 11.5,7.9 1.1,7.9" fill="none" stroke="#8a6d2f" stroke-width="1.2"/></svg>
<svg style="left:29.8px;top:361px;" width="18" height="18" viewBox="0 0 18 18">
<path d="M6.2,2 V11.2 H15.4 M6.2,11.2 L1.6,16" fill="none" stroke="#8a6d2f" stroke-width="1.2"/>
<path d="M6.2,0.6 L4.6,3.2 H7.8 Z M16.8,11.2 L14.2,9.6 V12.8 Z M0.6,17 L1.4,13.8 L3.8,16.2 Z" fill="#8a6d2f"/>
</svg>
<svg style="left:17px;top:390px;" width="8" height="9" viewBox="0 0 8 9"><polygon points="0.4,0.4 7.2,4.4 0.4,8.4" fill="#8d9293"/></svg>
<svg style="left:30.5px;top:387.5px;" width="16" height="14" viewBox="0 0 16 14">
<polygon points="1.4,5.6 5.9,6.1 3.4,12 3.7,13.6 11,13.4 11.2,11.6 10.9,11.8 5.9,6.8 1.5,6.6" fill="#8d918d"/>
<polygon points="3.4,12 10.9,11.8 11,13.3 3.7,13.5" fill="#e6e8e6" stroke="#7d817d" stroke-width="0.5"/>
<polygon points="4.5,0.8 15.4,0.5 10.9,11.7 3.4,11.9 5.9,5.9 1.4,5.4" fill="#b9ec98" stroke="#4b9a40" stroke-width="0.8" stroke-linejoin="round"/>
<path d="M5,1.6 L14.2,1.3" stroke="#d6f6c2" stroke-width="0.8"/>
</svg>
<svg style="left:30.5px;top:409.5px;" width="17" height="17" viewBox="0 0 32 30"><use href="#flatico"/></svg>
<!-- viewport magnifier -->
<svg style="left:643px;top:185px;" width="17" height="17" viewBox="0 0 17 17">
<rect x="0.9" y="1.1" width="13.6" height="13.4" fill="#f4f6f6" stroke="#a9aeaf" stroke-width="1"/>
<path d="M0.9,1.4 H14.5" stroke="#8d9293" stroke-width="1"/>
<path d="M10.4,10.6 L15.4,15.4" stroke="#8f9596" stroke-width="2.4" stroke-linecap="round"/>
<path d="M10.6,10.8 L15.2,15.2" stroke="#e6e9ea" stroke-width="0.9" stroke-linecap="round"/>
<circle cx="7.4" cy="7.4" r="4" fill="#e9f6fc" stroke="#2a88aa" stroke-width="1.1"/>
</svg>

<!-- viewport button -->


<!-- 3D model -->
<svg id="model" style="left:0;top:0;" width="667" height="503" viewBox="0 0 667 503">
<defs>
<linearGradient id="bend" gradientUnits="userSpaceOnUse" x1="362.2" y1="352.5" x2="365" y2="355.9">
<stop offset="0" stop-color="#5b646e"/><stop offset="1" stop-color="#9fabba"/>
</linearGradient>
</defs>
<!-- wall thickness / light edges -->
<polygon points="268,357.5 323.7,312.6 312.2,253.5 369.4,208.7 380.2,266.5 434.4,223 444.3,281 448,286.4 420,380 300,415 284.3,425 281,422.6 279.2,420 277.8,415" fill="#97a3b1"/>
<!-- floor side strips -->
<polygon points="591.3,322 592,325.5 427.4,460 427,456" fill="#69727d"/>
<polygon points="279.6,418 281,422.6 284.3,425.2 427.4,460 427.2,455 290,419 284,417" fill="#8f9aa8"/>
<!-- floor top + wall face with bend gradient -->
<polygon points="270.9,358.6 326.5,313.9 315,254.9 369.3,210.9 380.2,268.9 434.6,225.3 444.7,281.5 448,286 591.3,322 427.2,456.2 290,421.8 285,420.3 282.5,418.6 281.4,416.8" fill="url(#bend)"/>
<!-- csys -->
<g fill="none" stroke-width="0.9">
<line x1="424.3" y1="311.4" x2="422.4" y2="299" stroke="#2fd02f"/>
<line x1="424.3" y1="311.4" x2="412.5" y2="308.4" stroke="#e03030"/>
<line x1="424.3" y1="311.4" x2="433.3" y2="304.6" stroke="#30d8e8"/>
</g>
<circle cx="422.3" cy="298.8" r="2.9" fill="#2fe02f"/>
<circle cx="412.3" cy="308.3" r="2.5" fill="#f03030"/>
<circle cx="433.4" cy="304.5" r="2.1" fill="#40e8f8"/>
</svg>
</body>
</html>
